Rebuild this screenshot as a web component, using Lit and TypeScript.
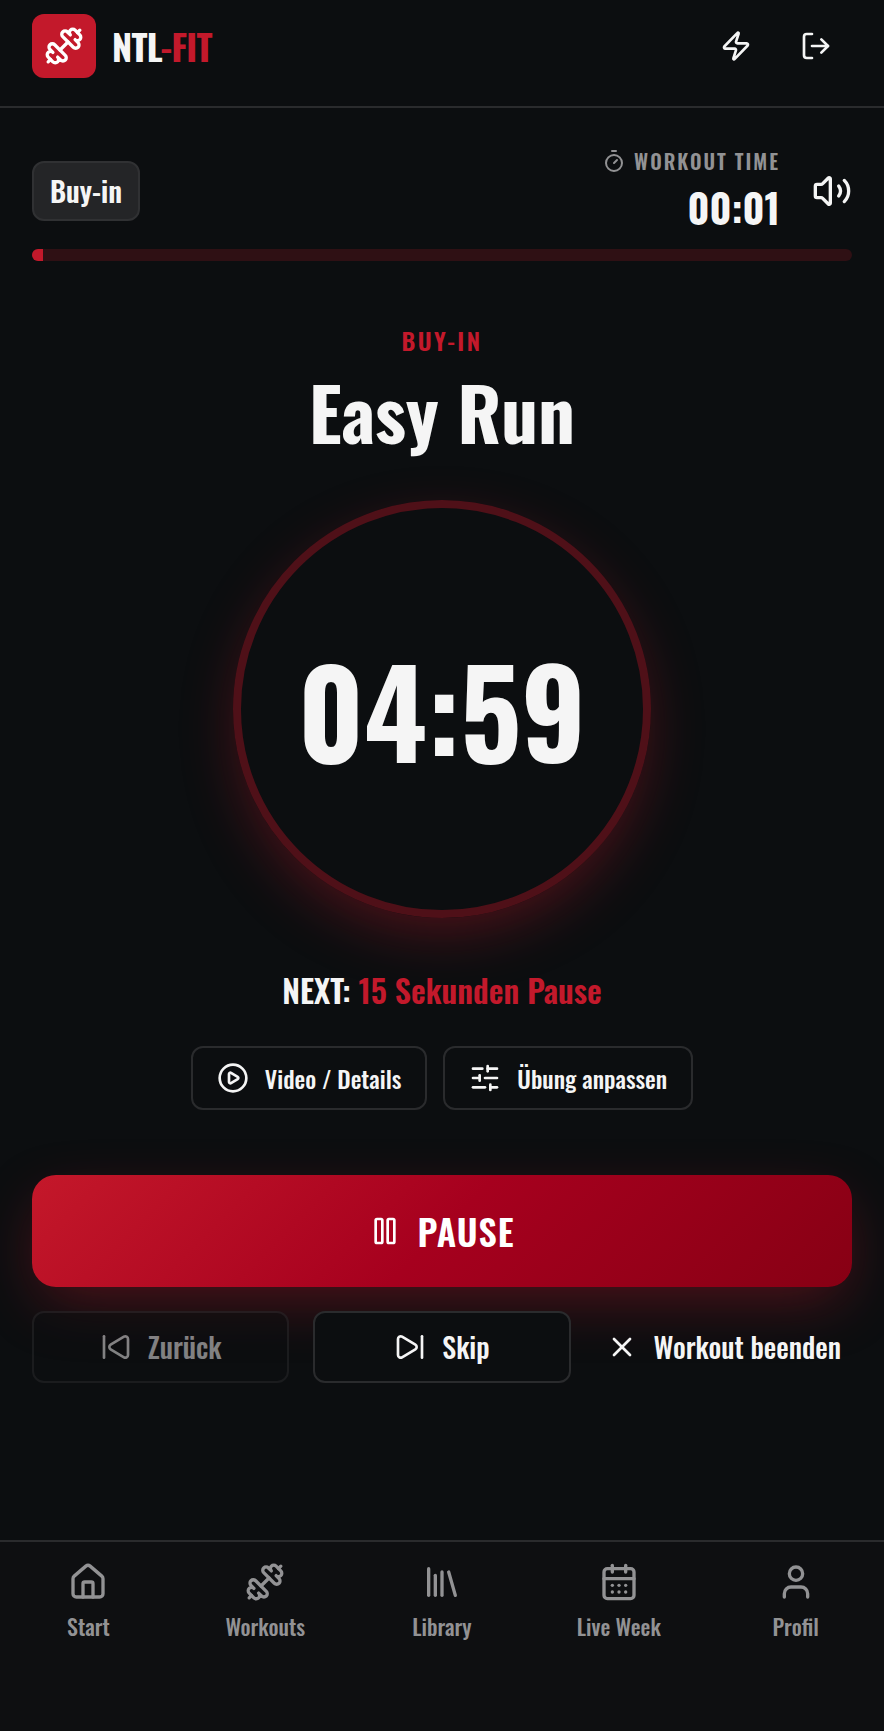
import { LitElement, html, css, svg, type SVGTemplateResult } from "lit";
import { customElement, property, state } from "lit/decorators.js";

const ICONS: Record<string, SVGTemplateResult> = {
  dumbbell: svg`<path d="M17.596 12.768a2 2 0 1 0 2.829-2.829l-1.768-1.767a2 2 0 0 0 2.828-2.829l-2.828-2.828a2 2 0 0 0-2.829 2.828l-1.767-1.768a2 2 0 1 0-2.829 2.829z"/><path d="m2.5 21.5 1.4-1.4"/><path d="m20.1 3.9 1.4-1.4"/><path d="M5.343 21.485a2 2 0 1 0 2.829-2.828l1.767 1.768a2 2 0 1 0 2.829-2.829l-6.364-6.364a2 2 0 1 0-2.829 2.829l1.768 1.767a2 2 0 0 0-2.828 2.829z"/><path d="m9.6 14.4 4.8-4.8"/>`,
  zap: svg`<path d="M4 14a1 1 0 0 1-.78-1.63l9.9-10.2a.5.5 0 0 1 .86.46l-1.92 6.02A1 1 0 0 0 13 10h7a1 1 0 0 1 .78 1.63l-9.9 10.2a.5.5 0 0 1-.86-.46l1.92-6.02A1 1 0 0 0 11 14z"/>`,
  logout: svg`<path d="m16 17 5-5-5-5"/><path d="M21 12H9"/><path d="M9 21H5a2 2 0 0 1-2-2V5a2 2 0 0 1 2-2h4"/>`,
  timer: svg`<path d="M10 2h4"/><path d="m12 14 3-3"/><circle cx="12" cy="14" r="8"/>`,
  volume: svg`<path d="M11 4.702a.705.705 0 0 0-1.203-.498L6.413 7.587A1.4 1.4 0 0 1 5.416 8H3a1 1 0 0 0-1 1v6a1 1 0 0 0 1 1h2.416a1.4 1.4 0 0 1 .997.413l3.383 3.384A.705.705 0 0 0 11 19.298z"/><path d="M16 9a5 5 0 0 1 0 6"/><path d="M19.364 18.364a9 9 0 0 0 0-12.728"/>`,
  play: svg`<path d="M9 9.003a1 1 0 0 1 1.517-.859l4.997 2.997a1 1 0 0 1 0 1.718l-4.997 2.997A1 1 0 0 1 9 14.996z"/><circle cx="12" cy="12" r="10"/>`,
  sliders: svg`<path d="M10 5H3"/><path d="M12 19H3"/><path d="M14 3v4"/><path d="M16 17v4"/><path d="M21 12h-9"/><path d="M21 19h-5"/><path d="M21 5h-7"/><path d="M8 10v4"/><path d="M8 12H3"/>`,
  pause: svg`<rect x="14" y="3" width="5" height="18" rx="1"/><rect x="5" y="3" width="5" height="18" rx="1"/>`,
  back: svg`<path d="M17.971 4.285A2 2 0 0 1 21 6v12a2 2 0 0 1-3.029 1.715l-9.997-5.998a2 2 0 0 1-.003-3.432z"/><path d="M3 20V4"/>`,
  forward: svg`<path d="M21 4v16"/><path d="M6.029 4.285A2 2 0 0 0 3 6v12a2 2 0 0 0 3.029 1.715l9.997-5.998a2 2 0 0 0 .003-3.432z"/>`,
  close: svg`<path d="M18 6 6 18"/><path d="m6 6 12 12"/>`,
  house: svg`<path d="M15 21v-8a1 1 0 0 0-1-1h-4a1 1 0 0 0-1 1v8"/><path d="M3 10a2 2 0 0 1 .709-1.528l7-5.999a2 2 0 0 1 2.582 0l7 5.999A2 2 0 0 1 21 10v9a2 2 0 0 1-2 2H5a2 2 0 0 1-2-2z"/>`,
  library: svg`<path d="m16 6 4 14"/><path d="M12 6v14"/><path d="M8 8v12"/><path d="M4 4v16"/>`,
  calendar: svg`<path d="M8 2v4"/><path d="M16 2v4"/><rect x="3" y="4" width="18" height="18" rx="2"/><path d="M3 10h18"/><path d="M8 14h.01"/><path d="M12 14h.01"/><path d="M16 14h.01"/><path d="M8 18h.01"/><path d="M12 18h.01"/><path d="M16 18h.01"/>`,
  user: svg`<path d="M19 21v-2a4 4 0 0 0-4-4H9a4 4 0 0 0-4 4v2"/><circle cx="12" cy="7" r="4"/>`,
};

@customElement("ui-icon")
export class UiIcon extends LitElement {
  @property() name = "";

  static styles = css`
    :host { display: inline-flex; flex: none; width: 32px; height: 32px; }
    .glyph { width: 100%; height: 100%; }
  `;

  render() {
    return html`<svg class="glyph" viewBox="0 0 24 24" fill="none" stroke="currentColor"
      stroke-width="2" stroke-linecap="round" stroke-linejoin="round" aria-hidden="true">${ICONS[this.name]}</svg>`;
  }
}

const NAV = [
  { icon: "house", label: "Start" },
  { icon: "dumbbell", label: "Workouts" },
  { icon: "library", label: "Library" },
  { icon: "calendar", label: "Live Week" },
  { icon: "user", label: "Profil" },
];

const clock = (s: number) =>
  `${String(Math.floor(s / 60)).padStart(2, "0")}:${String(s % 60).padStart(2, "0")}`;

@customElement("app-root")
export class AppRoot extends LitElement {
  @state() private elapsed = 1;
  @state() private remaining = 299;
  @state() private progress = 1.34;

  static styles = css`
    :host {
      --bg: #0c0e10;
      --fg: #f5f5f5;
      --red: #c3192b;
      --line: #2a2b2d;
      --muted: #929294;
      display: flex;
      flex-direction: column;
      min-height: 100vh;
      background: var(--bg);
      color: var(--fg);
      font-family: Oswald, "Liberation Sans Narrow", "Liberation Sans", sans-serif;
      font-weight: 500;
    }
    * { box-sizing: border-box; }
    button { font: inherit; color: inherit; background: none; border: 0; padding: 0; margin: 0; cursor: pointer; }
    .header {
      display: flex; align-items: center; justify-content: space-between;
      padding: 14px 32px 28px; border-bottom: 2px solid var(--line);
    }
    .brand { display: flex; align-items: center; gap: 16px; color: inherit; text-decoration: none; font-size: 36px; line-height: 48px; font-weight: 700; letter-spacing: -0.02em; }
    .logo { display: flex; align-items: center; justify-content: center; width: 64px; height: 64px; border-radius: 12px; background: var(--red); color: #fff; }
    .large { width: 40px; height: 40px; }
    .small { width: 24px; height: 24px; }
    .accent { color: var(--red); }
    .actions { display: flex; gap: 8px; }
    .action { display: flex; align-items: center; justify-content: center; width: 72px; height: 64px; }
    .main { flex: 1; padding: 37px 32px 64px; }
    .status { display: flex; align-items: center; justify-content: space-between; margin-bottom: 12px; }
    .chip { padding: 8px 16px; border: 2px solid #303133; border-radius: 12px; background: #242527; font-size: 28px; line-height: 40px; font-weight: 600; }
    .status-right { display: flex; align-items: center; gap: 32px; }
    .total { text-align: right; }
    .total-label { display: flex; align-items: center; justify-content: flex-end; gap: 8px; color: var(--muted); font-size: 20px; line-height: 32px; letter-spacing: 0.1em; font-weight: 600; }
    .total-time { font-size: 40px; line-height: 60px; font-weight: 700; }
    .mute { display: flex; }
    .track { height: 12px; border-radius: 6px; background: #2f1014; overflow: hidden; }
    .fill { height: 100%; background: var(--red); }
    .exercise { display: flex; flex-direction: column; align-items: center; margin-top: 60px; text-align: center; }
    .phase { color: var(--red); font-size: 24px; line-height: 38px; letter-spacing: 0.1em; font-weight: 600; }
    .title { margin: 10px 0 47px; font-size: 73px; line-height: 84px; font-weight: 700; }
    .ring {
      display: flex; align-items: center; justify-content: center;
      width: 418px; max-width: 100%; aspect-ratio: 1;
      border: 8px solid #4f1018; border-radius: 50%;
      box-shadow: 0 20px 60px -10px rgba(195, 25, 43, 0.4);
    }
    .count { font-size: 120px; line-height: 144px; font-weight: 700; }
    .next { margin: 48px 0 32px; font-size: 32px; line-height: 48px; font-weight: 600; }
    .tools { display: flex; flex-wrap: wrap; justify-content: center; gap: 16px; }
    .outline {
      display: flex; align-items: center; justify-content: center; gap: 16px;
      border: 2px solid var(--line); border-radius: 12px; background: var(--bg);
    }
    .tool { height: 64px; padding: 0 24px; font-size: 24px; line-height: 32px; }
    .pause {
      display: flex; align-items: center; justify-content: center; gap: 16px;
      width: 100%; height: 112px; margin: 65px 0 24px; border-radius: 24px; color: #fff;
      font-size: 36px; line-height: 48px; font-weight: 600; letter-spacing: 1px;
      background: linear-gradient(135deg, #c4182a 0%, #a6001e 50%, #870014 100%);
      box-shadow: 0 20px 60px -10px rgba(195, 25, 43, 0.4);
    }
    .controls { display: grid; grid-template-columns: repeat(3, 1fr); gap: 24px; position: relative; }
    .control { height: 72px; font-size: 28px; line-height: 40px; white-space: nowrap; }
    .plain { display: flex; align-items: center; justify-content: center; gap: 16px; }
    .control:disabled { opacity: 0.5; cursor: default; }
    .nav { display: grid; grid-template-columns: repeat(5, 1fr); padding: 20px 0 89px; border-top: 2px solid var(--line); background: #0e0f11; }
    .tab { display: flex; flex-direction: column; align-items: center; gap: 8px; color: var(--muted); text-decoration: none; font-size: 22px; line-height: 32px; }
  `;

  render() {
    return html`
      <header class="header">
        <a class="brand" href="#">
          <span class="logo"><ui-icon class="large" name="dumbbell"></ui-icon></span>
          <span>NTL<span class="accent">-FIT</span></span>
        </a>
        <div class="actions">
          <button class="action" aria-label="Schnellstart"><ui-icon name="zap"></ui-icon></button>
          <button class="action" aria-label="Abmelden"><ui-icon name="logout"></ui-icon></button>
        </div>
      </header>
      <main class="main">
        <div class="status">
          <span class="chip">Buy-in</span>
          <div class="status-right">
            <div class="total">
              <div class="total-label"><ui-icon class="small" name="timer"></ui-icon>WORKOUT TIME</div>
              <div class="total-time">${clock(this.elapsed)}</div>
            </div>
            <button class="mute" aria-label="Ton"><ui-icon class="large" name="volume"></ui-icon></button>
          </div>
        </div>
        <div class="track" role="progressbar" aria-label="Fortschritt" aria-valuenow=${this.progress}>
          <div class="fill" style="width:${this.progress}%"></div>
        </div>
        <section class="exercise">
          <div class="phase">BUY-IN</div>
          <h1 class="title">Easy Run</h1>
          <div class="ring"><span class="count" role="timer">${clock(this.remaining)}</span></div>
          <p class="next">NEXT: <span class="accent">15 Sekunden Pause</span></p>
          <div class="tools">
            <button class="outline tool"><ui-icon name="play"></ui-icon>Video / Details</button>
            <button class="outline tool"><ui-icon name="sliders"></ui-icon>Übung anpassen</button>
          </div>
        </section>
        <button class="pause"><ui-icon name="pause"></ui-icon>PAUSE</button>
        <div class="controls">
          <button class="outline control" disabled><ui-icon name="back"></ui-icon>Zurück</button>
          <button class="outline control"><ui-icon name="forward"></ui-icon>Skip</button>
          <button class="plain control"><ui-icon name="close"></ui-icon>Workout beenden</button>
        </div>
      </main>
      <nav class="nav" aria-label="Hauptnavigation">
        ${NAV.map((t) => html`<a class="tab" href="#"><ui-icon class="large" name=${t.icon}></ui-icon><span>${t.label}</span></a>`)}
      </nav>
    `;
  }
}
